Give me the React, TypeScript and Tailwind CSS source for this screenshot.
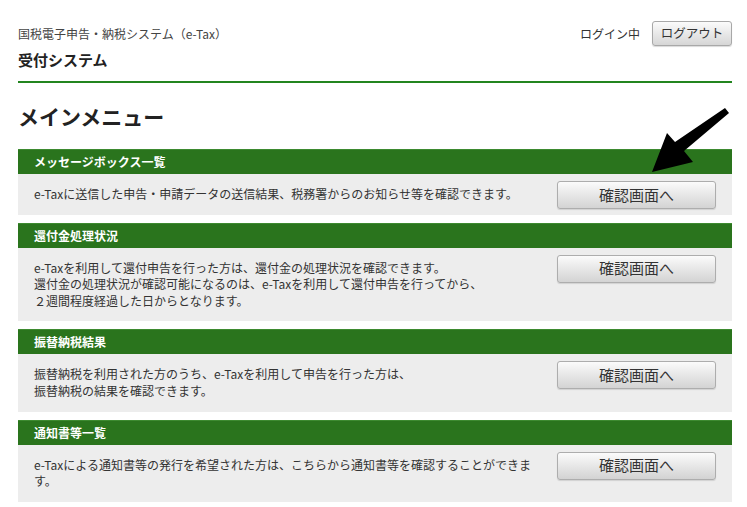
import React from "react";

const sections: { title: string; lines: string[] }[] = [
  {
    title: "メッセージボックス一覧",
    lines: ["e-Taxに送信した申告・申請データの送信結果、税務署からのお知らせ等を確認できます。"],
  },
  {
    title: "還付金処理状況",
    lines: [
      "e-Taxを利用して還付申告を行った方は、還付金の処理状況を確認できます。",
      "還付金の処理状況が確認可能になるのは、e-Taxを利用して還付申告を行ってから、",
      "２週間程度経過した日からとなります。",
    ],
  },
  {
    title: "振替納税結果",
    lines: [
      "振替納税を利用された方のうち、e-Taxを利用して申告を行った方は、",
      "振替納税の結果を確認できます。",
    ],
  },
  {
    title: "通知書等一覧",
    lines: ["e-Taxによる通知書等の発行を希望された方は、こちらから通知書等を確認することができます。"],
  },
];

export default function App() {
  return (
    <div
      className="relative w-[747px] h-[507px] bg-white overflow-hidden text-[#333]"
      style={{ fontFamily: '"Noto Sans CJK JP", "Noto Sans", sans-serif' }}
    >
      <div className="pl-[18px] pr-[15px]">
        <div className="flex items-center justify-between pt-[21px]">
          <div className="text-[12px] leading-[18px] text-[#444]">国税電子申告・納税システム（e-Tax）</div>
          <div className="flex items-center gap-[12px]">
            <span className="text-[12px] text-[#333]">ログイン中</span>
            <button className="w-[80px] h-[25px] rounded-[3px] border border-[#a8a8a8] bg-gradient-to-b from-[#fbfbfb] to-[#d6d6d6] text-[12.5px] text-[#333] shadow-[0_1px_1px_rgba(0,0,0,0.15)]">
              ログアウト
            </button>
          </div>
        </div>
        <div className="mt-[4px] text-[15px] leading-[20px] font-bold text-[#222]">受付システム</div>
        <div className="mt-[11px] h-[2px] bg-[#23851f]" />
        <h1 className="mt-[18px] text-[21px] leading-[30px] font-bold text-[#222]">メインメニュー</h1>
        <div className="mt-[18px] flex flex-col gap-[8px]">
          {sections.map((s) => (
            <div key={s.title}>
              <div className="h-[25px] bg-[#2a741d] border-t border-[#3d8a30] px-[16px] flex items-center text-white text-[12px] font-bold">
                {s.title}
              </div>
              <div className="flex bg-[#ededed]">
                <div className="flex-1 pl-[16px] pr-[17px] py-[12px] text-[12px] leading-[16.6px] text-[#333]">
                  {s.lines.map((l, i) => (
                    <div key={i}>{l}</div>
                  ))}
                </div>
                <div className="shrink-0 pt-[7px] pr-[16px]">
                  <button className="w-[159px] h-[28px] rounded-[3px] border border-[#adadad] bg-gradient-to-b from-[#fbfbfb] to-[#d3d3d3] text-[15px] text-[#333] shadow-[0_1px_1px_rgba(0,0,0,0.12)]">
                    確認画面へ
                  </button>
                </div>
              </div>
            </div>
          ))}
        </div>
      </div>
      <svg className="absolute left-0 top-0" width="747" height="507" viewBox="0 0 747 507">
        <polygon
          points="652,172 667,133 675,142 725,108 729,113 684,151 693,162"
          fill="#000"
        />
      </svg>
    </div>
  );
}
